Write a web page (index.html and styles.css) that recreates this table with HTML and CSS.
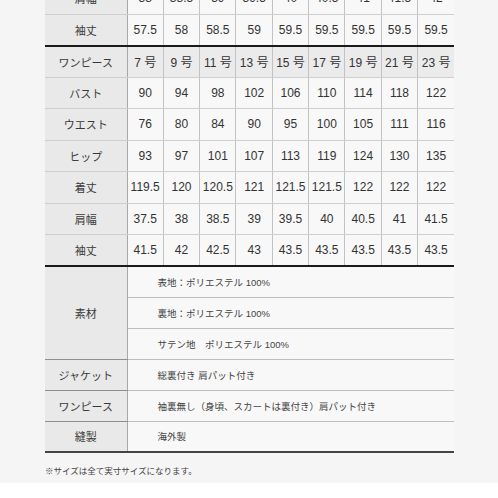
FILE: index.html
```html
<!DOCTYPE html>
<html lang="ja">
<head>
<meta charset="utf-8">
<link rel="stylesheet" href="styles.css">
</head>
<body>
<div class="page">
<table class="size">
<colgroup><col class="c-label"><col><col><col><col><col><col><col><col><col></colgroup>
<tbody>
<tr class="r"><th>肩幅</th><td>38</td><td>38.5</td><td>39</td><td>39.5</td><td>40</td><td>40.5</td><td>41</td><td>41.5</td><td>42</td></tr>
<tr class="r last"><th>袖丈</th><td>57.5</td><td>58</td><td>58.5</td><td>59</td><td>59.5</td><td>59.5</td><td>59.5</td><td>59.5</td><td>59.5</td></tr>
<tr class="r head"><th>ワンピース</th><td>7 号</td><td>9 号</td><td>11 号</td><td>13 号</td><td>15 号</td><td>17 号</td><td>19 号</td><td>21 号</td><td>23 号</td></tr>
<tr class="r"><th>バスト</th><td>90</td><td>94</td><td>98</td><td>102</td><td>106</td><td>110</td><td>114</td><td>118</td><td>122</td></tr>
<tr class="r"><th>ウエスト</th><td>76</td><td>80</td><td>84</td><td>90</td><td>95</td><td>100</td><td>105</td><td>111</td><td>116</td></tr>
<tr class="r"><th>ヒップ</th><td>93</td><td>97</td><td>101</td><td>107</td><td>113</td><td>119</td><td>124</td><td>130</td><td>135</td></tr>
<tr class="r"><th>着丈</th><td>119.5</td><td>120</td><td>120.5</td><td>121</td><td>121.5</td><td>121.5</td><td>122</td><td>122</td><td>122</td></tr>
<tr class="r"><th>肩幅</th><td>37.5</td><td>38</td><td>38.5</td><td>39</td><td>39.5</td><td>40</td><td>40.5</td><td>41</td><td>41.5</td></tr>
<tr class="r last"><th>袖丈</th><td>41.5</td><td>42</td><td>42.5</td><td>43</td><td>43.5</td><td>43.5</td><td>43.5</td><td>43.5</td><td>43.5</td></tr>
<tr class="m"><th rowspan="3">素材</th><td colspan="9" class="txt">表地：ポリエステル 100%</td></tr>
<tr class="m"><td colspan="9" class="txt">裏地：ポリエステル 100%</td></tr>
<tr class="m"><td colspan="9" class="txt">サテン地　ポリエステル 100%</td></tr>
<tr class="m"><th>ジャケット</th><td colspan="9" class="txt">総裏付き 肩パット付き</td></tr>
<tr class="m"><th>ワンピース</th><td colspan="9" class="txt">袖裏無し（身頃、スカートは裏付き）肩パット付き</td></tr>
<tr class="m end"><th>縫製</th><td colspan="9" class="txt">海外製</td></tr>
</tbody>
</table>
<p class="note">※サイズは全て実寸サイズになります。</p>
</div>
</body>
</html>
```

FILE: styles.css
```css
html, body {
  margin: 0;
  padding: 0;
  background: #ffffff;
}
.page {
  background: #f5f5f5;
  margin-top: -18px;
  padding: 0 0 6px 45px;
  font-family: "Liberation Sans", "Noto Sans CJK JP", sans-serif;
  color: #333333;
}
.size {
  width: 409px;
  table-layout: fixed;
  border-collapse: collapse;
}
.c-label {
  width: 82px;
}
.size th,
.size td {
  padding: 0;
  border-top: 1px solid #cfcfcf;
  border-bottom: 1px solid #cfcfcf;
  font-weight: normal;
  text-align: center;
  vertical-align: middle;
}
.size th {
  background: #e9e9e9;
  font-size: 11px;
  color: #3a3a3a;
  border-right: 1px solid #a8a8a8;
}
.size td {
  background: #f8f8f8;
  font-size: 12px;
  border-left: 1px solid #c2c2c2;
}
.size tr.r {
  height: 31.5px;
}
.size tr.m {
  height: 31px;
}
.size tr.head td {
  background: #ebebeb;
}
.size tr.last th,
.size tr.last td {
  border-bottom: 2px solid #1a1a1a;
}
.size td.txt {
  text-align: left;
  padding-left: 30px;
  font-size: 9.5px;
  color: #444444;
  border-bottom: 1px solid #bdbdbd;
}
.size tr.m th {
  border-bottom: 1px solid #8f8f8f;
}
.size tr.end th,
.size tr.end td {
  border-bottom: 2px solid #444444;
}
.note {
  margin: 12px 0 0 0;
  font-size: 8.5px;
  color: #444444;
  line-height: 12px;
}
```
